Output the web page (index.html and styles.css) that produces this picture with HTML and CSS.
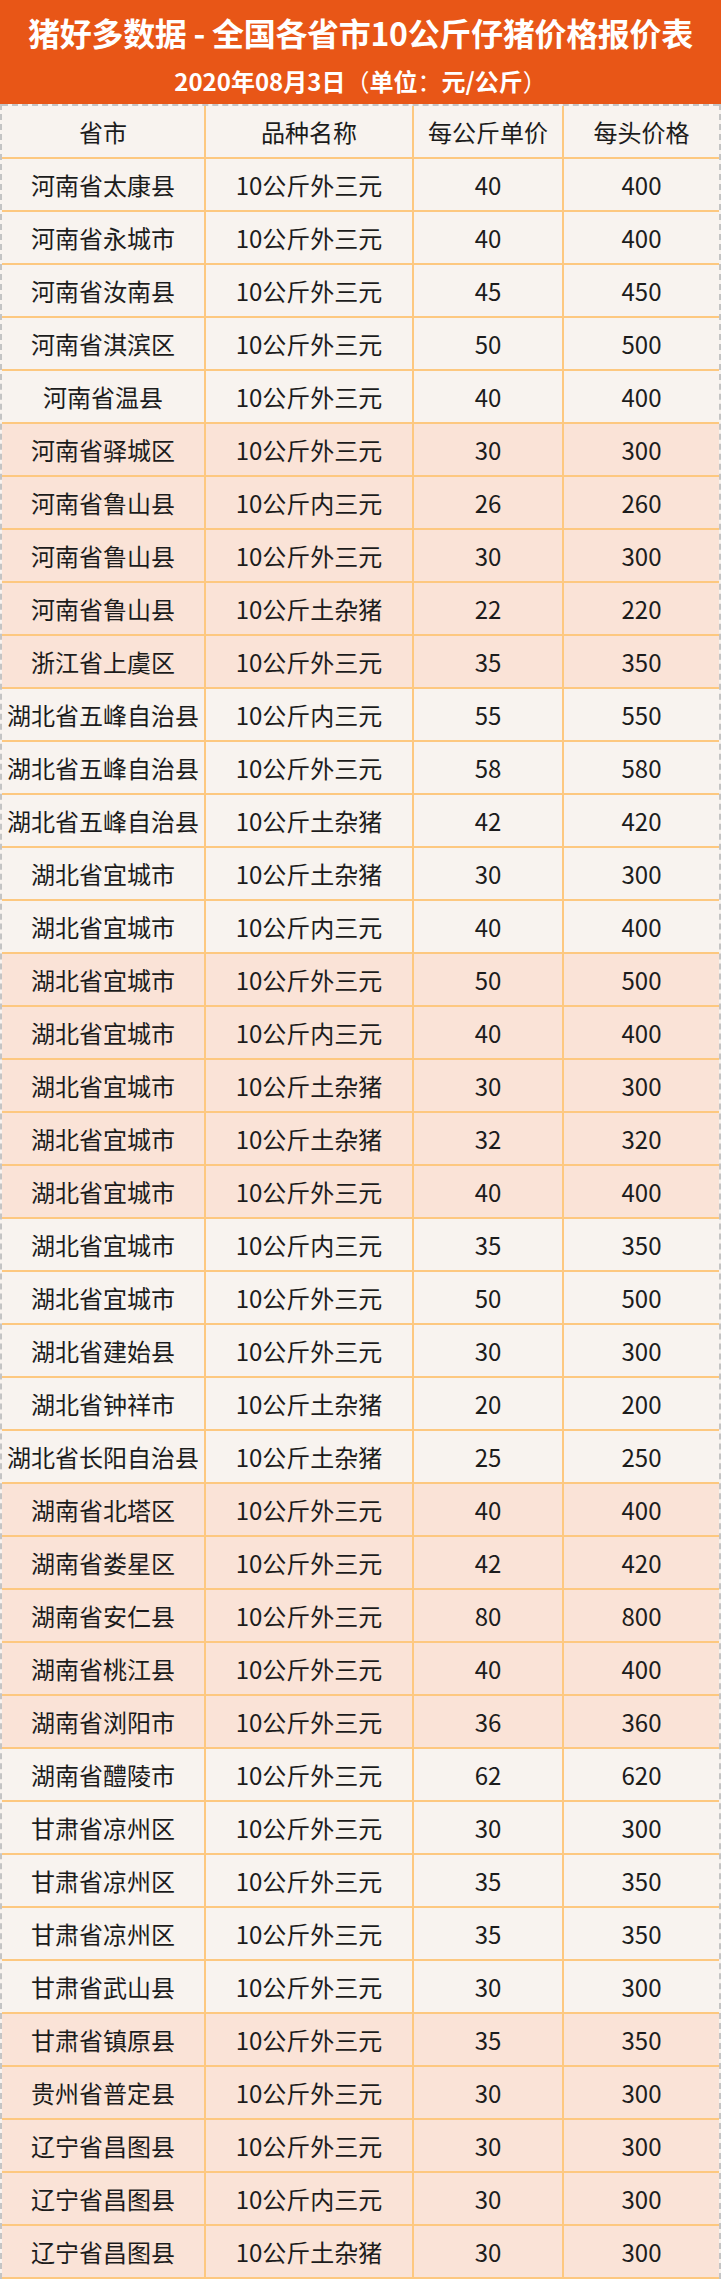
FILE: index.html
```html
<!DOCTYPE html>
<html lang="zh-CN">
<head>
<meta charset="utf-8">
<title>猪好多数据 - 全国各省市10公斤仔猪价格报价表</title>
<link rel="stylesheet" href="styles.css">
</head>
<body>
<div class="page">
  <header class="banner">
    <h1 class="title">猪好多数据 - 全国各省市10公斤仔猪价格报价表</h1>
    <p class="subtitle">2020年08月3日<span class="punct">（</span>单位<span class="punct">：</span>元/公斤<span class="punct">）</span></p>
  </header>
  <div class="table">
    <div class="row head"><div class="cell">省市</div><div class="cell">品种名称</div><div class="cell">每公斤单价</div><div class="cell">每头价格</div></div>
    <div class="row"><div class="cell">河南省太康县</div><div class="cell">10公斤外三元</div><div class="cell">40</div><div class="cell">400</div></div>
    <div class="row"><div class="cell">河南省永城市</div><div class="cell">10公斤外三元</div><div class="cell">40</div><div class="cell">400</div></div>
    <div class="row"><div class="cell">河南省汝南县</div><div class="cell">10公斤外三元</div><div class="cell">45</div><div class="cell">450</div></div>
    <div class="row"><div class="cell">河南省淇滨区</div><div class="cell">10公斤外三元</div><div class="cell">50</div><div class="cell">500</div></div>
    <div class="row"><div class="cell">河南省温县</div><div class="cell">10公斤外三元</div><div class="cell">40</div><div class="cell">400</div></div>
    <div class="row alt"><div class="cell">河南省驿城区</div><div class="cell">10公斤外三元</div><div class="cell">30</div><div class="cell">300</div></div>
    <div class="row alt"><div class="cell">河南省鲁山县</div><div class="cell">10公斤内三元</div><div class="cell">26</div><div class="cell">260</div></div>
    <div class="row alt"><div class="cell">河南省鲁山县</div><div class="cell">10公斤外三元</div><div class="cell">30</div><div class="cell">300</div></div>
    <div class="row alt"><div class="cell">河南省鲁山县</div><div class="cell">10公斤土杂猪</div><div class="cell">22</div><div class="cell">220</div></div>
    <div class="row alt"><div class="cell">浙江省上虞区</div><div class="cell">10公斤外三元</div><div class="cell">35</div><div class="cell">350</div></div>
    <div class="row"><div class="cell">湖北省五峰自治县</div><div class="cell">10公斤内三元</div><div class="cell">55</div><div class="cell">550</div></div>
    <div class="row"><div class="cell">湖北省五峰自治县</div><div class="cell">10公斤外三元</div><div class="cell">58</div><div class="cell">580</div></div>
    <div class="row"><div class="cell">湖北省五峰自治县</div><div class="cell">10公斤土杂猪</div><div class="cell">42</div><div class="cell">420</div></div>
    <div class="row"><div class="cell">湖北省宜城市</div><div class="cell">10公斤土杂猪</div><div class="cell">30</div><div class="cell">300</div></div>
    <div class="row"><div class="cell">湖北省宜城市</div><div class="cell">10公斤内三元</div><div class="cell">40</div><div class="cell">400</div></div>
    <div class="row alt"><div class="cell">湖北省宜城市</div><div class="cell">10公斤外三元</div><div class="cell">50</div><div class="cell">500</div></div>
    <div class="row alt"><div class="cell">湖北省宜城市</div><div class="cell">10公斤内三元</div><div class="cell">40</div><div class="cell">400</div></div>
    <div class="row alt"><div class="cell">湖北省宜城市</div><div class="cell">10公斤土杂猪</div><div class="cell">30</div><div class="cell">300</div></div>
    <div class="row alt"><div class="cell">湖北省宜城市</div><div class="cell">10公斤土杂猪</div><div class="cell">32</div><div class="cell">320</div></div>
    <div class="row alt"><div class="cell">湖北省宜城市</div><div class="cell">10公斤外三元</div><div class="cell">40</div><div class="cell">400</div></div>
    <div class="row"><div class="cell">湖北省宜城市</div><div class="cell">10公斤内三元</div><div class="cell">35</div><div class="cell">350</div></div>
    <div class="row"><div class="cell">湖北省宜城市</div><div class="cell">10公斤外三元</div><div class="cell">50</div><div class="cell">500</div></div>
    <div class="row"><div class="cell">湖北省建始县</div><div class="cell">10公斤外三元</div><div class="cell">30</div><div class="cell">300</div></div>
    <div class="row"><div class="cell">湖北省钟祥市</div><div class="cell">10公斤土杂猪</div><div class="cell">20</div><div class="cell">200</div></div>
    <div class="row"><div class="cell">湖北省长阳自治县</div><div class="cell">10公斤土杂猪</div><div class="cell">25</div><div class="cell">250</div></div>
    <div class="row alt"><div class="cell">湖南省北塔区</div><div class="cell">10公斤外三元</div><div class="cell">40</div><div class="cell">400</div></div>
    <div class="row alt"><div class="cell">湖南省娄星区</div><div class="cell">10公斤外三元</div><div class="cell">42</div><div class="cell">420</div></div>
    <div class="row alt"><div class="cell">湖南省安仁县</div><div class="cell">10公斤外三元</div><div class="cell">80</div><div class="cell">800</div></div>
    <div class="row alt"><div class="cell">湖南省桃江县</div><div class="cell">10公斤外三元</div><div class="cell">40</div><div class="cell">400</div></div>
    <div class="row alt"><div class="cell">湖南省浏阳市</div><div class="cell">10公斤外三元</div><div class="cell">36</div><div class="cell">360</div></div>
    <div class="row"><div class="cell">湖南省醴陵市</div><div class="cell">10公斤外三元</div><div class="cell">62</div><div class="cell">620</div></div>
    <div class="row"><div class="cell">甘肃省凉州区</div><div class="cell">10公斤外三元</div><div class="cell">30</div><div class="cell">300</div></div>
    <div class="row"><div class="cell">甘肃省凉州区</div><div class="cell">10公斤外三元</div><div class="cell">35</div><div class="cell">350</div></div>
    <div class="row"><div class="cell">甘肃省凉州区</div><div class="cell">10公斤外三元</div><div class="cell">35</div><div class="cell">350</div></div>
    <div class="row"><div class="cell">甘肃省武山县</div><div class="cell">10公斤外三元</div><div class="cell">30</div><div class="cell">300</div></div>
    <div class="row alt"><div class="cell">甘肃省镇原县</div><div class="cell">10公斤外三元</div><div class="cell">35</div><div class="cell">350</div></div>
    <div class="row alt"><div class="cell">贵州省普定县</div><div class="cell">10公斤外三元</div><div class="cell">30</div><div class="cell">300</div></div>
    <div class="row alt"><div class="cell">辽宁省昌图县</div><div class="cell">10公斤外三元</div><div class="cell">30</div><div class="cell">300</div></div>
    <div class="row alt"><div class="cell">辽宁省昌图县</div><div class="cell">10公斤内三元</div><div class="cell">30</div><div class="cell">300</div></div>
    <div class="row alt last"><div class="cell">辽宁省昌图县</div><div class="cell">10公斤土杂猪</div><div class="cell">30</div><div class="cell">300</div></div>
  </div>
</div>
</body>
</html>
```

FILE: styles.css
```css
html, body {
  margin: 0;
  padding: 0;
  background: #ffffff;
}

body {
  font-family: "Noto Sans CJK SC", "Noto Sans", sans-serif;
  color: #1c1c1c;
}

.page {
  width: 721px;
}

.banner {
  height: 104px;
  box-sizing: border-box;
  background: #e85617;
  color: #ffffff;
  padding-top: 12px;
  text-align: center;
}

.title {
  margin: 0;
  font-size: 32px;
  line-height: 40px;
  font-weight: 700;
  letter-spacing: -0.3px;
}

.subtitle {
  margin: 14px 0 0;
  font-size: 24px;
  line-height: 30px;
  font-weight: 700;
  text-spacing-trim: space-all;
}

.punct {
  font-family: "Noto Sans CJK TC", "Noto Sans CJK SC", sans-serif;
  font-weight: 400;
}

.table {
  border-left: 2px dashed #c4c4c4;
  border-right: 2px dashed #c4c4c4;
  background: #f8f3ef;
}

.row {
  display: grid;
  grid-template-columns: 202px 208px 150px 1fr;
  height: 53px;
  box-sizing: border-box;
  border-top: 2px solid #fdc880;
  background: #f8f3ef;
}

.row.head {
  border-top: 2px dashed #c4c4c4;
}

.row.alt {
  background: #fae3d7;
}

.row.last {
  height: 55px;
  border-bottom: 2px solid #fdc880;
}

.cell {
  display: flex;
  align-items: center;
  justify-content: center;
  font-size: 24px;
  line-height: 30px;
  white-space: nowrap;
  box-sizing: border-box;
}

.cell + .cell {
  border-left: 2px solid #fdc880;
}
```
